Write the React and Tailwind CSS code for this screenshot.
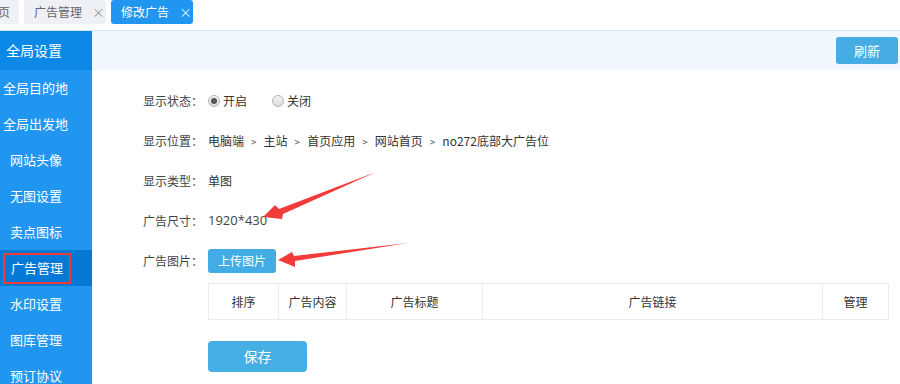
import React from 'react';

const menu = [
  { name: '全局目的地', pad: 'pl-[3px]' },
  { name: '全局出发地', pad: 'pl-[3px]' },
  { name: '网站头像', pad: 'pl-[10px]' },
  { name: '无图设置', pad: 'pl-[10px]' },
  { name: '卖点图标', pad: 'pl-[10px]' },
  { name: '广告管理', pad: 'pl-[10px]', active: true },
  { name: '水印设置', pad: 'pl-[10px]' },
  { name: '图库管理', pad: 'pl-[10px]' },
  { name: '预订协议', pad: 'pl-[10px]' },
];

const crumbs = ['电脑端', '主站', '首页应用', '网站首页', 'no272底部大广告位'];

const columns = [
  { title: '排序', w: 'w-[69px]' },
  { title: '广告内容', w: 'w-[68px]' },
  { title: '广告标题', w: 'w-[136px]' },
  { title: '广告链接', w: 'w-[340px]' },
  { title: '管理', w: 'flex-1' },
];

function Radio({ checked, label }) {
  return (
    <label className="flex items-center gap-[3px]">
      <span className="w-[12px] h-[12px] rounded-full border border-[#b5b5b5] bg-gradient-to-b from-[#f4f4f4] to-[#dcdcdc] flex items-center justify-center">
        {checked && <span className="w-[6px] h-[6px] rounded-full bg-[#555]" />}
      </span>
      <span>{label}</span>
    </label>
  );
}

function Row({ label, children }) {
  return (
    <div className="h-10 flex items-center">
      <div className="w-[65px] text-[#444]">{label}</div>
      <div className="flex items-center text-[#333]">{children}</div>
    </div>
  );
}

export default function App() {
  return (
    <div
      className="relative w-[900px] h-[384px] overflow-hidden bg-white text-[12px]"
      style={{ fontFamily: '"Noto Sans CJK SC", "Noto Sans", sans-serif' }}
    >
      {/* Tabs */}
      <div className="h-[30px] flex gap-[5px] items-start">
        <div className="ml-[-23px] h-[24px] px-[9px] flex items-center bg-[#eef0f6] rounded-[3px] text-[#666]">首页</div>
        <div className="h-[24px] w-[82px] pl-[10px] flex items-center bg-[#eef0f6] rounded-[3px] text-[#666]">
          <span>广告管理</span>
          <span className="ml-[10px] text-[#999] text-[13px]">×</span>
        </div>
        <div className="h-[24px] w-[82px] pl-[10px] flex items-center bg-[#2196f0] rounded-[3px] text-white">
          <span>修改广告</span>
          <span className="ml-[10px] text-[#dcefff] text-[13px]">×</span>
        </div>
      </div>
      <div className="h-px bg-[#d8e7f7]" />

      <div className="flex h-[353px]">
        {/* Sidebar */}
        <div className="w-[92px] shrink-0 bg-[#2196f0] text-white text-[13px]">
          <div className="h-[39px] bg-[#0c88e6] flex items-center pl-[6px] text-[14px]">全局设置</div>
          {menu.map((m) => (
            <div
              key={m.name}
              className={`h-[36px] flex items-center whitespace-nowrap ${m.pad} ${m.active ? 'bg-[#0678d6]' : ''}`}
            >
              {m.active ? (
                <span className="ml-[-7px] px-[6px] h-[31px] w-[68px] flex items-center border-[2px] border-[#ef3a3a]">{m.name}</span>
              ) : (
                m.name
              )}
            </div>
          ))}
        </div>

        {/* Main */}
        <div className="flex-1">
          <div className="h-[39px] bg-[#f0f7fe] flex items-center justify-end pr-[2px]">
            <button className="w-[62px] h-[27px] rounded-[3px] bg-[#45ade3] text-white text-[13px]">刷新</button>
          </div>

          <div className="pl-[51px] pt-[11px]">
            <Row label="显示状态：">
              <div className="flex gap-[25px]">
                <Radio checked label="开启" />
                <Radio label="关闭" />
              </div>
            </Row>
            <Row label="显示位置：">
              {crumbs.map((c, i) => (
                <span key={c} className="flex items-center">
                  {i > 0 && <span className="mx-[7px] text-[10px] text-[#555]">&gt;</span>}
                  {c}
                </span>
              ))}
            </Row>
            <Row label="显示类型：">单图</Row>
            <Row label="广告尺寸：">
              <span className="text-[13px] text-[#444]" style={{ fontFamily: '"Open Sans", "Noto Sans", sans-serif' }}>1920*430</span>
            </Row>
            <Row label="广告图片：">
              <button className="w-[68px] h-[24px] rounded-[3px] bg-[#42ace4] text-white">上传图片</button>
            </Row>

            <div className="ml-[65px] mt-[2px] w-[681px] h-[37px] flex border border-[#ececec] text-[#333]">
              {columns.map((c, i) => (
                <div
                  key={c.title}
                  className={`${c.w} flex items-center justify-center ${i > 0 ? 'border-l border-[#ececec]' : ''}`}
                >
                  {c.title}
                </div>
              ))}
            </div>

            <button className="ml-[65px] mt-[21px] w-[99px] h-[31px] rounded-[4px] bg-[#45afe3] text-white text-[14px]">保存</button>
          </div>
        </div>
      </div>

      {/* Annotation arrows */}
      <svg className="absolute left-0 top-0 pointer-events-none" width="900" height="384">
        <polygon points="263,217 275,205 279,209 376,172 283,214 282,219" fill="#f23b3b" />
        <polygon points="278,260 292,252 294,256 408,243 295,261 295,267" fill="#f23b3b" />
      </svg>
    </div>
  );
}
